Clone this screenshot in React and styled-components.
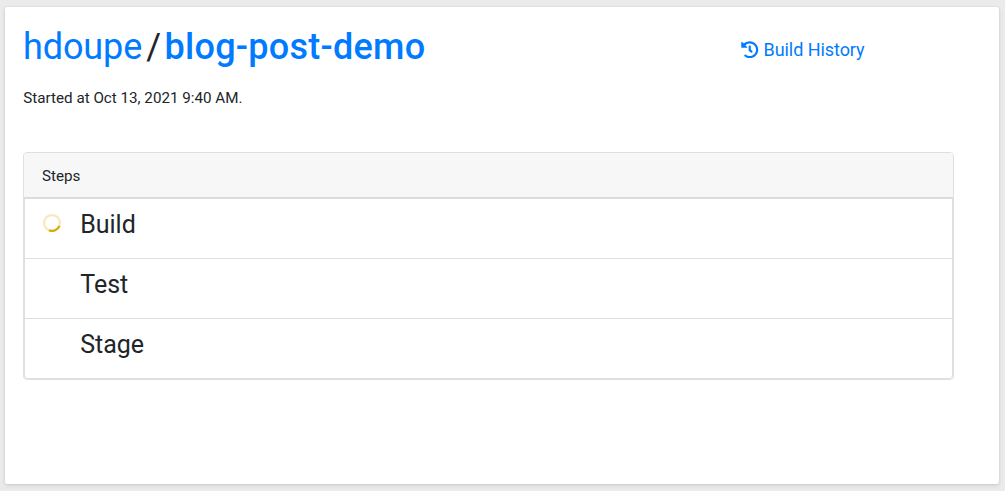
import React from "react";
import styled, { createGlobalStyle } from "styled-components";
import { FaHistory } from "react-icons/fa";

const Global = createGlobalStyle`
  *, *::before, *::after { box-sizing: border-box; }
  body { margin: 0; background: #ebebeb; color: #212529; font: 400 15.2px/1.5 Roboto, sans-serif; overflow: hidden; }
  #root { height: 491px; }
`;
const Page = styled.main`
  height: 491px;
  padding: 7px 6px 7px 5px;
`;
const Panel = styled.section`
  height: 477px;
  padding: 19px 45px 0 18px;
  background: #fff;
  border-radius: 2px;
  box-shadow: 0 2px 4px rgba(0, 0, 0, 0.1), 0 0 2px rgba(0, 0, 0, 0.12);
`;
const Header = styled.header`
  display: flex;
  justify-content: space-between;
  height: 45px;
`;
const Title = styled.h1`
  margin: 0;
  font-size: 36px;
  font-weight: 400;
  line-height: 43px;
  white-space: nowrap;
`;
const Link = styled.a`
  color: #007bff;
  text-decoration: none;
  font-weight: ${(p) => (p.$strong ? 500 : 400)};
  letter-spacing: ${(p) => (p.$strong ? "0.25px" : "-0.1px")};
`;
const Slash = styled.span`
  margin: 0 3.5px 0 4px;
`;
const HistoryLink = styled(Link)`
  display: flex;
  align-items: center;
  gap: 5px;
  height: 27px;
  margin: 10px 89.5px 0 0;
  font-size: 18px;
  letter-spacing: -0.06px;
  svg { width: 17.5px; height: 17.5px; }
`;
const Started = styled.p`
  margin: 16px 0 0 0.3px;
  line-height: 23px;
`;
const Card = styled.section`
  margin-top: 42px;
  height: 228px;
  border: 1px solid #dfdfdf;
  border-radius: 4px;
`;
const CardHeader = styled.div`
  height: 45px;
  padding: 12px 18px 9px;
  line-height: 23px;
  border-bottom: 1px solid #d9d9d9;
  border-radius: 3px 3px 0 0;
  background: #f7f7f7;
`;
const Steps = styled.ul`
  list-style: none;
  margin: 0;
  padding: 0;
  border: 1px solid #dfdfdf;
  border-bottom: 0;
  border-radius: 0 0 4px 4px;
`;
const Step = styled.li`
  display: flex;
  height: 60px;
  padding: 11px 18px;
  font-size: 25px;
  line-height: 30px;
  border-bottom: 1px solid #dfdfdf;
  &:last-child { border-radius: 0 0 4px 4px; }
`;
const StatusSlot = styled.div`
  width: 37.2px;
  padding-top: 4px;
`;
const Spinner = styled.svg`
  display: block;
  width: 18px;
  height: 18px;
  fill: none;
  stroke-width: 2.25;
`;

const steps = [{ name: "Build", running: true }, { name: "Test" }, { name: "Stage" }];

export default function App() {
  return (
    <Page>
      <Global />
      <Panel>
        <Header>
          <Title><Link>hdoupe</Link><Slash>/</Slash><Link $strong>blog-post-demo</Link></Title>
          <HistoryLink><FaHistory />Build History</HistoryLink>
        </Header>
        <Started>Started at Oct 13, 2021 9:40 AM.</Started>
        <Card>
          <CardHeader>Steps</CardHeader>
          <Steps>
            {steps.map((step) => (
              <Step key={step.name}>
                <StatusSlot>
                  {step.running && (
                    <Spinner viewBox="0 0 18 18">
                      <circle cx="9" cy="9" r="7.9" stroke="#f8e9bf" />
                      <path d="M16.37 11.83A7.9 7.9 0 0 1 5.91 16.27" stroke="#d9a906" />
                    </Spinner>
                  )}
                </StatusSlot>
                {step.name}
              </Step>
            ))}
          </Steps>
        </Card>
      </Panel>
    </Page>
  );
}
